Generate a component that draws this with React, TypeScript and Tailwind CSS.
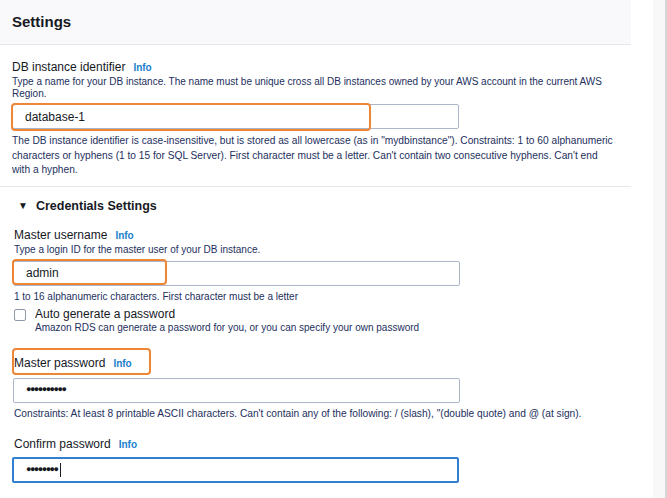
import React from 'react';

// Small blue "Info" link shown beside field labels
const Info = () => (
    <span className="ml-[8px] text-[10px] font-bold text-[#1a7fcc]">Info</span>
);

// Orange annotation box that sits over a part of the form
const Highlight = ({ className }: { className: string }) => (
    <div className={`pointer-events-none absolute rounded-[4px] border-2 border-[#ef8636] ${className}`} />
);

const Field = ({ value, focused, dots }: { value: string; focused?: boolean; dots?: boolean }) => (
    <div
        className={`flex w-[447px] items-center rounded-[2px] bg-white pl-[12px] ${focused
            ? 'h-[26px] border-2 border-[#2f7fd3]'
            : 'h-[25px] border border-[#aab7c8]'
            }`}
    >
        {dots ? (
            <span className="text-[9px] font-bold tracking-[-1.5px] text-[#16191f]">{value}</span>
        ) : (
            <span className="text-[12px] text-[#16191f]">{value}</span>
        )}
        {focused && <span className="ml-[2px] h-[14px] w-px bg-[#16191f]" />}
    </div>
);

export default function App() {
    return (
        <div
            className="flex h-[498px] w-[667px] overflow-hidden bg-white text-[#16191f]"
            style={{ fontFamily: '"Liberation Sans", Arial, sans-serif' }}
        >
            <div className="w-[631px] shrink-0">
                {/* Header */}
                <div className="flex h-[45px] items-center border-b border-[#e4e7ec] bg-[#f9f9fc] px-[12px]">
                    <h2 className="text-[15px] font-bold">Settings</h2>
                </div>

                {/* DB instance identifier */}
                <div className="border-b border-[#e4e7ec] px-[12px] pb-[8px] pt-[14px]">
                    <div className="flex items-baseline text-[12px] leading-[16px]">
                        DB instance identifier <Info />
                    </div>
                    <p className="text-[10px] leading-[12px] text-[#232f5e]">
                        Type a name for your DB instance. The name must be unique cross all DB instances owned by your AWS account in the current AWS Region.
                    </p>
                    <div className="relative mt-[4px]">
                        <Field value="database-1" />
                        <Highlight className="-left-[1px] -top-[1px] h-[28px] w-[360px]" />
                    </div>
                    <p className="mt-[5px] pr-[4px] text-[10.2px] leading-[14.5px] text-[#232f5e]">
                        The DB instance identifier is case-insensitive, but is stored as all lowercase (as in "mydbinstance"). Constraints: 1 to 60 alphanumeric characters or hyphens (1 to 15 for SQL Server). First character must be a letter. Can't contain two consecutive hyphens. Can't end with a hyphen.
                    </p>
                </div>

                {/* Credentials Settings */}
                <div className="px-[12px] pt-[11px]">
                    <div className="flex items-center text-[12.5px] font-bold leading-[16px]">
                        <span className="ml-[6px] mr-[8px] text-[10px]">▼</span>
                        Credentials Settings
                    </div>

                    <div className="mt-[13px] flex items-baseline pl-[2px] text-[12px] leading-[16px]">
                        Master username <Info />
                    </div>
                    <p className="pl-[2px] text-[10px] leading-[12px] text-[#232f5e]">
                        Type a login ID for the master user of your DB instance.
                    </p>
                    <div className="relative mt-[5px] pl-[1px]">
                        <Field value="admin" />
                        <Highlight className="-top-[2px] left-0 h-[26px] w-[155px]" />
                    </div>
                    <p className="mt-[5px] pl-[2px] text-[10px] leading-[12px] text-[#232f5e]">
                        1 to 16 alphanumeric characters. First character must be a letter
                    </p>

                    <div className="mt-[3px] flex items-start pl-[2px]">
                        <div className="mt-[3px] h-[12px] w-[12px] rounded-[2px] border border-[#8d99a8] bg-white" />
                        <div className="ml-[9px]">
                            <div className="text-[12px] leading-[16px]">Auto generate a password</div>
                            <div className="text-[10px] leading-[12px] text-[#232f5e]">
                                Amazon RDS can generate a password for you, or you can specify your own password
                            </div>
                        </div>
                    </div>

                    <div className="relative mt-[21px] flex items-baseline pl-[2px] text-[12px] leading-[16px]">
                        Master password <Info />
                        <Highlight className="-top-[7px] left-0 h-[27px] w-[139px]" />
                    </div>
                    <div className="mt-[6px] pl-[1px]">
                        <Field value="●●●●●●●●●●" dots />
                    </div>
                    <p className="mt-[5px] pl-[2px] text-[10.2px] leading-[12px] text-[#232f5e]">
                        Constraints: At least 8 printable ASCII characters. Can't contain any of the following: / (slash), "(double quote) and @ (at sign).
                    </p>

                    <div className="mt-[16px] flex items-baseline pl-[2px] text-[12px] leading-[16px]">
                        Confirm password <Info />
                    </div>
                    <div className="mt-[4px]">
                        <Field value="●●●●●●●●" dots focused />
                    </div>
                </div>
            </div>

            {/* Right edge of the page */}
            <div className="w-[22px] shrink-0" />
            <div className="w-[12px] shrink-0 bg-[#f8f8f8]" />
            <div className="w-[2px] shrink-0 bg-[#d6d6d6]" />
        </div>
    );
}
